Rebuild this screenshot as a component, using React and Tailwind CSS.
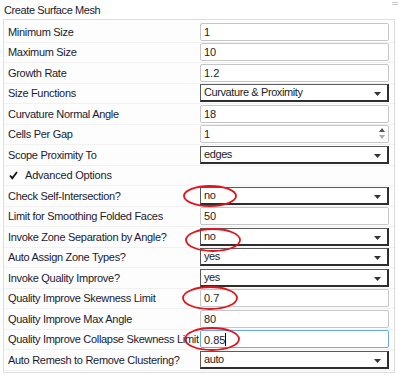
import React from 'react'

const rows = [
    { label: 'Minimum Size', type: 'text', value: '1' },
    { label: 'Maximum Size', type: 'text', value: '10' },
    { label: 'Growth Rate', type: 'text', value: '1.2' },
    { label: 'Size Functions', type: 'select', value: 'Curvature & Proximity' },
    { label: 'Curvature Normal Angle', type: 'text', value: '18' },
    { label: 'Cells Per Gap', type: 'spin', value: '1' },
    { label: 'Scope Proximity To', type: 'select', value: 'edges' },
    { label: 'Advanced Options', type: 'check' },
    { label: 'Check Self-Intersection?', type: 'select', value: 'no' },
    { label: 'Limit for Smoothing Folded Faces', type: 'text', value: '50' },
    { label: 'Invoke Zone Separation by Angle?', type: 'select', value: 'no' },
    { label: 'Auto Assign Zone Types?', type: 'select', value: 'yes' },
    { label: 'Invoke Quality Improve?', type: 'select', value: 'yes' },
    { label: 'Quality Improve Skewness Limit', type: 'text', value: '0.7' },
    { label: 'Quality Improve Max Angle', type: 'text', value: '80' },
    { label: 'Quality Improve Collapse Skewness Limit', type: 'focus', value: '0.85' },
    { label: 'Auto Remesh to Remove Clustering?', type: 'select', value: 'auto' },
]

const Arrow = () => (
    <svg width="7" height="4" viewBox="0 0 7 4" className="absolute right-[6px] top-[7px]">
        <path d="M0 0h7L3.5 4z" fill="#333" />
    </svg>
)

const Field = ({ row }) => {
    if (row.type === 'check') return null
    if (row.type === 'select') {
        return (
            <div className="relative h-[18px] w-[189px] border border-[#5a5a5a] border-r-2 border-b-2 border-r-[#2e2e2e] border-b-[#2e2e2e] bg-white pl-[3px] text-[11px] leading-[15px] tracking-[-0.4px] text-[#1c1c1c]">
                {row.value}
                <Arrow />
            </div>
        )
    }
    if (row.type === 'spin') {
        return (
            <div className="relative h-[18px] w-[189px] rounded-[2px] border border-[#c6c6c6] bg-white pl-[3px] text-[11px] leading-[16px] text-[#1c1c1c]">
                {row.value}
                <div className="absolute right-[3px] top-[2px] flex flex-col gap-[3px]">
                    <svg width="6" height="4" viewBox="0 0 6 4"><path d="M0 4L3 0l3 4z" fill="#555" /></svg>
                    <svg width="6" height="4" viewBox="0 0 6 4"><path d="M0 0h6L3 4z" fill="#aaa" /></svg>
                </div>
            </div>
        )
    }
    if (row.type === 'focus') {
        return (
            <div className="h-[18px] w-[189px] rounded-[2px] border border-[#6aa8e6] bg-white pl-[3px] text-[11px] leading-[16px] text-[#1c1c1c]">
                {row.value}<span className="inline-block h-[13px] w-px translate-y-[2px] bg-black" />
            </div>
        )
    }
    return (
        <div className="h-[18px] w-[189px] rounded-[2px] border border-[#c6c6c6] bg-white pl-[3px] text-[11px] leading-[16px] text-[#1c1c1c]">
            {row.value}
        </div>
    )
}

export default function App() {
    return (
        <div className="relative h-[376px] w-[400px] overflow-hidden bg-white" style={{ fontFamily: '"Liberation Sans", Arial, sans-serif' }}>

            {/* title */}
            <div className="h-[19px] pl-[4px] pt-[3px] text-[11px] leading-[15px] tracking-[-0.4px] text-[#1a1a2e]">Create Surface Mesh</div>

            {/* panel */}
            <div className="ml-[3px] w-[392px] h-[354px] border border-[#dedede] bg-[#fdfdfd] pt-[2px]">
                {rows.map((r, i) => (
                    <div key={i} className="flex h-[20.5px] items-center border-b border-[#f1f1f1]">
                        {r.type === 'check' ? (
                            <div className="flex items-center pl-[5px] text-[11px] tracking-[-0.2px] text-[#1a1a2e]">
                                <svg width="9" height="9" viewBox="0 0 9 9" className="mr-[7px]">
                                    <path d="M1 4.5l2.3 2.7L8 1" stroke="#111" strokeWidth="1.8" fill="none" />
                                </svg>
                                {r.label}
                            </div>
                        ) : (
                            <>
                                <div className="w-[196px] pl-[4px] text-[11px] tracking-[-0.3px] whitespace-nowrap text-[#1a1a2e]">{r.label}</div>
                                <Field row={r} />
                            </>
                        )}
                    </div>
                ))}
            </div>

            {/* grip dots on right */}
            <div className="absolute right-[2px] top-[2px] flex flex-col gap-[1px]">
                <span className="h-px w-[6px] bg-[#ccc]" />
                <span className="h-px w-[6px] bg-[#ccc]" />
            </div>

            {/* red annotation rings */}
            <svg width="400" height="376" className="absolute left-0 top-0 pointer-events-none">
                <g fill="none" stroke="#e0141c" strokeWidth="1.8">
                    <ellipse cx="210" cy="196" rx="26" ry="10" />
                    <ellipse cx="213" cy="240" rx="27" ry="11" />
                    <ellipse cx="210" cy="298" rx="27" ry="11" />
                    <ellipse cx="212" cy="339" rx="27" ry="11" />
                </g>
            </svg>
        </div>
    )
}
